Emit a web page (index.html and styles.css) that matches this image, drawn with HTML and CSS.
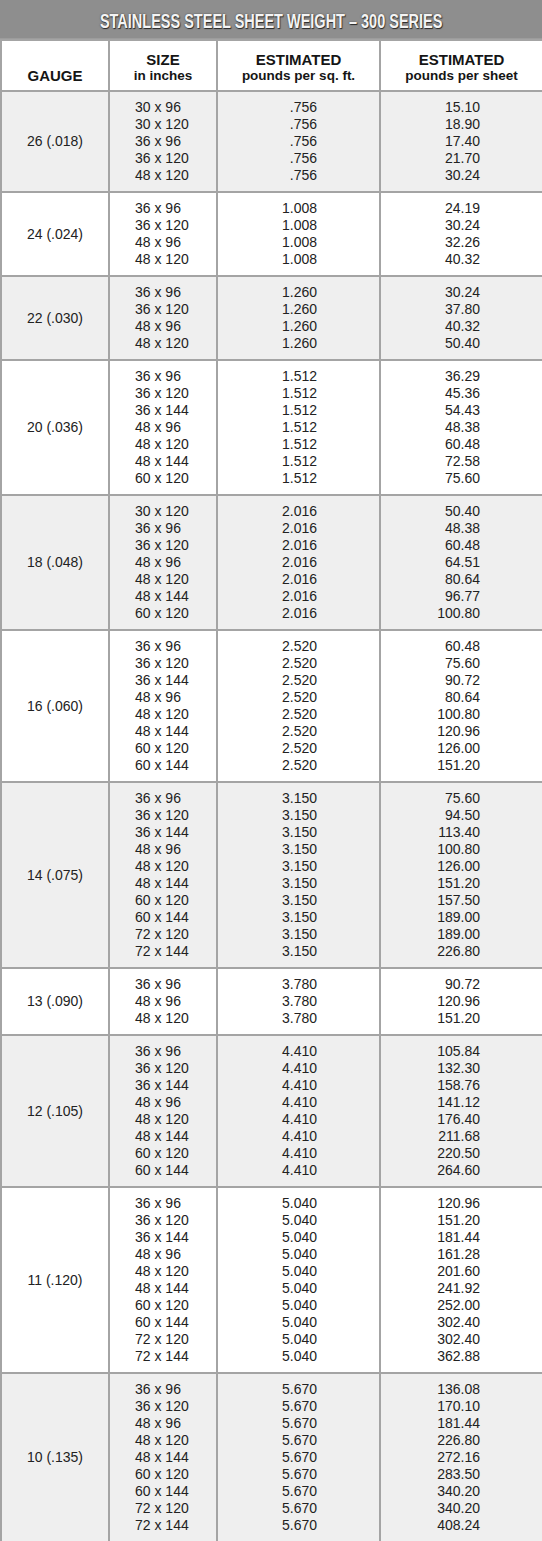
FILE: index.html
```html
<!DOCTYPE html>
<html>
<head>
<meta charset="utf-8">
<link rel="stylesheet" href="styles.css">
</head>
<body>
<div class="sheet">
  <div class="title"><span class="title-text">STAINLESS STEEL SHEET WEIGHT – 300 SERIES</span></div>
  <table class="weights">
    <colgroup>
      <col class="c-gauge"><col class="c-size"><col class="c-sqft"><col class="c-sheet">
    </colgroup>
    <thead>
      <tr>
        <th>GAUGE</th>
        <th>SIZE<span class="sub">in inches</span></th>
        <th>ESTIMATED<span class="sub">pounds per sq. ft.</span></th>
        <th>ESTIMATED<span class="sub">pounds per sheet</span></th>
      </tr>
    </thead>
    <tbody>
      <tr class="shade">
        <td class="gauge">26 (.018)</td>
        <td class="size">30 x 96<br>30 x 120<br>36 x 96<br>36 x 120<br>48 x 120</td>
        <td class="num">.756<br>.756<br>.756<br>.756<br>.756</td>
        <td class="num">15.10<br>18.90<br>17.40<br>21.70<br>30.24</td>
      </tr>
      <tr>
        <td class="gauge">24 (.024)</td>
        <td class="size">36 x 96<br>36 x 120<br>48 x 96<br>48 x 120</td>
        <td class="num">1.008<br>1.008<br>1.008<br>1.008</td>
        <td class="num">24.19<br>30.24<br>32.26<br>40.32</td>
      </tr>
      <tr class="shade">
        <td class="gauge">22 (.030)</td>
        <td class="size">36 x 96<br>36 x 120<br>48 x 96<br>48 x 120</td>
        <td class="num">1.260<br>1.260<br>1.260<br>1.260</td>
        <td class="num">30.24<br>37.80<br>40.32<br>50.40</td>
      </tr>
      <tr>
        <td class="gauge">20 (.036)</td>
        <td class="size">36 x 96<br>36 x 120<br>36 x 144<br>48 x 96<br>48 x 120<br>48 x 144<br>60 x 120</td>
        <td class="num">1.512<br>1.512<br>1.512<br>1.512<br>1.512<br>1.512<br>1.512</td>
        <td class="num">36.29<br>45.36<br>54.43<br>48.38<br>60.48<br>72.58<br>75.60</td>
      </tr>
      <tr class="shade">
        <td class="gauge">18 (.048)</td>
        <td class="size">30 x 120<br>36 x 96<br>36 x 120<br>48 x 96<br>48 x 120<br>48 x 144<br>60 x 120</td>
        <td class="num">2.016<br>2.016<br>2.016<br>2.016<br>2.016<br>2.016<br>2.016</td>
        <td class="num">50.40<br>48.38<br>60.48<br>64.51<br>80.64<br>96.77<br>100.80</td>
      </tr>
      <tr>
        <td class="gauge">16 (.060)</td>
        <td class="size">36 x 96<br>36 x 120<br>36 x 144<br>48 x 96<br>48 x 120<br>48 x 144<br>60 x 120<br>60 x 144</td>
        <td class="num">2.520<br>2.520<br>2.520<br>2.520<br>2.520<br>2.520<br>2.520<br>2.520</td>
        <td class="num">60.48<br>75.60<br>90.72<br>80.64<br>100.80<br>120.96<br>126.00<br>151.20</td>
      </tr>
      <tr class="shade">
        <td class="gauge">14 (.075)</td>
        <td class="size">36 x 96<br>36 x 120<br>36 x 144<br>48 x 96<br>48 x 120<br>48 x 144<br>60 x 120<br>60 x 144<br>72 x 120<br>72 x 144</td>
        <td class="num">3.150<br>3.150<br>3.150<br>3.150<br>3.150<br>3.150<br>3.150<br>3.150<br>3.150<br>3.150</td>
        <td class="num">75.60<br>94.50<br>113.40<br>100.80<br>126.00<br>151.20<br>157.50<br>189.00<br>189.00<br>226.80</td>
      </tr>
      <tr>
        <td class="gauge">13 (.090)</td>
        <td class="size">36 x 96<br>48 x 96<br>48 x 120</td>
        <td class="num">3.780<br>3.780<br>3.780</td>
        <td class="num">90.72<br>120.96<br>151.20</td>
      </tr>
      <tr class="shade">
        <td class="gauge">12 (.105)</td>
        <td class="size">36 x 96<br>36 x 120<br>36 x 144<br>48 x 96<br>48 x 120<br>48 x 144<br>60 x 120<br>60 x 144</td>
        <td class="num">4.410<br>4.410<br>4.410<br>4.410<br>4.410<br>4.410<br>4.410<br>4.410</td>
        <td class="num">105.84<br>132.30<br>158.76<br>141.12<br>176.40<br>211.68<br>220.50<br>264.60</td>
      </tr>
      <tr>
        <td class="gauge">11 (.120)</td>
        <td class="size">36 x 96<br>36 x 120<br>36 x 144<br>48 x 96<br>48 x 120<br>48 x 144<br>60 x 120<br>60 x 144<br>72 x 120<br>72 x 144</td>
        <td class="num">5.040<br>5.040<br>5.040<br>5.040<br>5.040<br>5.040<br>5.040<br>5.040<br>5.040<br>5.040</td>
        <td class="num">120.96<br>151.20<br>181.44<br>161.28<br>201.60<br>241.92<br>252.00<br>302.40<br>302.40<br>362.88</td>
      </tr>
      <tr class="shade">
        <td class="gauge">10 (.135)</td>
        <td class="size">36 x 96<br>36 x 120<br>48 x 96<br>48 x 120<br>48 x 144<br>60 x 120<br>60 x 144<br>72 x 120<br>72 x 144</td>
        <td class="num">5.670<br>5.670<br>5.670<br>5.670<br>5.670<br>5.670<br>5.670<br>5.670<br>5.670</td>
        <td class="num">136.08<br>170.10<br>181.44<br>226.80<br>272.16<br>283.50<br>340.20<br>340.20<br>408.24</td>
      </tr>
    </tbody>
  </table>
</div>
</body>
</html>
```

FILE: styles.css
```css
html, body {
  margin: 0;
  padding: 0;
  background: #ffffff;
}

body {
  font-family: "Liberation Sans", Arial, Helvetica, sans-serif;
  color: #222;
}

.sheet {
  width: 542px;
}

.title {
  height: 39px;
  box-sizing: border-box;
  background: #8e8e8e;
  border-bottom: 1px solid #9c9c9c;
  display: flex;
  align-items: center;
  justify-content: center;
  padding-top: 3px;
  overflow: hidden;
}

.title-text {
  display: inline-block;
  white-space: nowrap;
  font-weight: bold;
  font-size: 21px;
  color: #f4f4f4;
  transform: scaleX(0.69);
  text-shadow: 1px 1px 1px #2a2a2a, 0 0 2px #444;
}

.weights {
  width: 542px;
  table-layout: fixed;
  border-collapse: collapse;
  border: 2px solid #909090;
  border-top: none;
}

.c-gauge { width: 108px; }
.c-size { width: 108px; }
.c-sqft { width: 163px; }
.c-sheet { width: 163px; }

.weights th,
.weights td {
  border: 2px solid #a4a4a4;
}

.weights th {
  background: #fff;
  color: #151515;
  font-size: 15px;
  line-height: 17px;
  font-weight: bold;
  text-align: center;
  vertical-align: bottom;
  padding: 10px 0 6px;
}

.weights th .sub {
  display: block;
  font-size: 13.5px;
  line-height: 16px;
  font-weight: bold;
}

.weights td {
  font-size: 14px;
  line-height: 17px;
  padding: 7px 0;
  vertical-align: middle;
  background: #fff;
}

.weights tr.shade td {
  background: #efefef;
}

.gauge {
  text-align: center;
}

.size {
  text-align: left;
  padding-left: 25px !important;
}

.num {
  text-align: right;
  padding-right: 62px !important;
}
```
